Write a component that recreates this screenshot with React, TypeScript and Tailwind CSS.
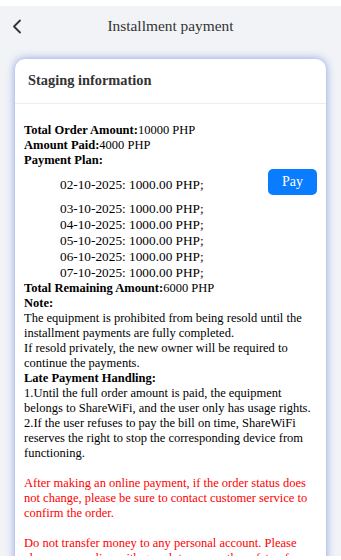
import React from "react";

const plan = [
  "02-10-2025: 1000.00 PHP;",
  "03-10-2025: 1000.00 PHP;",
  "04-10-2025: 1000.00 PHP;",
  "05-10-2025: 1000.00 PHP;",
  "06-10-2025: 1000.00 PHP;",
  "07-10-2025: 1000.00 PHP;",
];

export default function App() {
  return (
    <div className="h-[560px] flex flex-col bg-white pt-[6px] pb-[4px] font-['Liberation_Serif',serif]">
      <div className="flex-1 overflow-hidden bg-[#f2f3f7]">
        {/* top bar */}
        <div className="h-[40px] flex items-center">
          <div className="w-[40px] pl-[12px] flex items-center">
            <svg width="10" height="15" viewBox="0 0 10 15" fill="none">
              <polyline points="8,1.5 2,7.5 8,13.5" stroke="#333" strokeWidth="1.8" strokeLinecap="round" strokeLinejoin="round" />
            </svg>
          </div>
          <div className="flex-1 text-center text-[15.4px] text-[#333]">Installment payment</div>
          <div className="w-[40px]" />
        </div>

        {/* card */}
        <div className="mx-[15px] mt-[13px] bg-white rounded-[10px] shadow-[0_0_8px_rgba(70,110,210,0.65)]">
          <div className="h-[45px] pl-[13px] flex items-center border-b border-[#eeeeee] text-[14.4px] font-bold text-[#333]">
            Staging information
          </div>
          <div className="px-[9px] pt-[19px] pb-6 text-[12.5px] leading-[15px] text-black">
            <div>
              <b>Total Order Amount:</b>10000 PHP
            </div>
            <div>
              <b>Amount Paid:</b>4000 PHP
            </div>
            <div>
              <b>Payment Plan:</b>
            </div>
            <div className="text-[13.3px] leading-[16px]">
              {plan.map((p, i) =>
                i === 0 ? (
                  <div key={p} className="h-[33px] flex items-center justify-between">
                    <span className="pl-[36px]">{p}</span>
                    <button className="w-[49px] h-[26px] mb-[5px] rounded-[5px] bg-[#0a7cff] text-white text-[14px] font-['Liberation_Serif',serif]">
                      Pay
                    </button>
                  </div>
                ) : (
                  <div key={p} className="pl-[36px]">
                    {p}
                  </div>
                )
              )}
            </div>
            <div>
              <b>Total Remaining Amount:</b>6000 PHP
            </div>
            <div>
              <b>Note:</b>
            </div>
            <div>The equipment is prohibited from being resold until the installment payments are fully completed.</div>
            <div>If resold privately, the new owner will be required to continue the payments.</div>
            <div>
              <b>Late Payment Handling:</b>
            </div>
            <div>1.Until the full order amount is paid, the equipment belongs to ShareWiFi, and the user only has usage rights.</div>
            <div>
              2.If the user refuses to pay the bill on time, ShareWiFi reserves the right to stop the corresponding device from functioning.
            </div>
            <div className="mt-[15px] text-[#ff0000]">
              After making an online payment, if the order status does not change, please be sure to contact customer service to confirm the order.
            </div>
            <div className="mt-[15px] text-[#ff0000]">
              Do not transfer money to any personal account. Please always pay online with g-cash to ensure the safety of your funds.
            </div>
          </div>
        </div>
      </div>
    </div>
  );
}
